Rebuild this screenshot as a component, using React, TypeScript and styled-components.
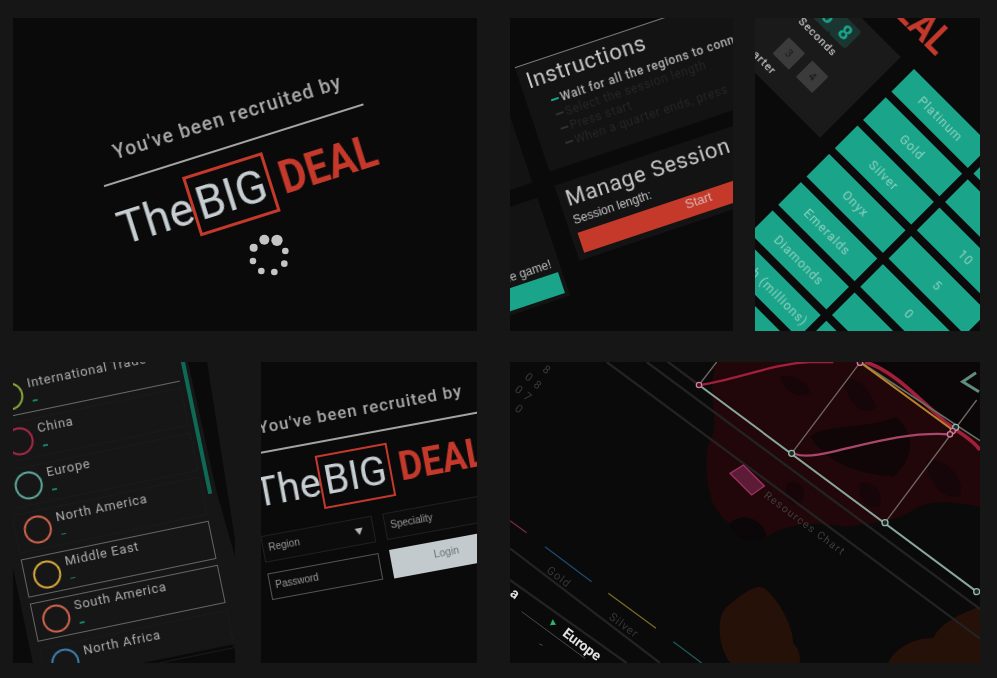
import React from 'react';
import styled, { createGlobalStyle } from 'styled-components';

const Global = createGlobalStyle`
  html, body { margin: 0; padding: 0; background: #161616; }
  * { box-sizing: border-box; }
`;

const Page = styled.main`
  width: 997px;
  height: 678px;
  padding: 18px 17px 15px 13px;
  display: flex;
  flex-direction: column;
  gap: 31px;
  background: #161616;
  font-family: Roboto, sans-serif;
  overflow: hidden;
`;
const Row = styled.section<{ $h: number }>`
  display: flex;
  height: ${p => p.$h}px;
`;
const Tile = styled.article<{ $w: number; $ml?: number }>`
  position: relative;
  flex: none;
  width: ${p => p.$w}px;
  margin-left: ${p => p.$ml ?? 0}px;
  height: 100%;
  overflow: hidden;
  background: #0a0a0b;
`;
const Stage = styled.div<{ $x: number; $y: number; $angle: number }>`
  position: absolute;
  left: ${p => p.$x}px;
  top: ${p => p.$y}px;
  transform: rotate(${p => p.$angle}deg);
  transform-origin: 0 0;
  filter: blur(0.35px);
`;

/* shared lock-up: headline, rule, logo */
const LockUp = styled.div<{ $size: number }>`
  font-size: ${p => p.$size}px;
  width: 5.91em;
`;
const Headline = styled.div`
  font-size: 0.42em;
  font-weight: 500;
  line-height: 1.2em;
  height: 2.02em;
  padding-left: 0.98em;
  letter-spacing: 0.062em;
  white-space: nowrap;
  color: #a9a9a9;
`;
const Rule = styled.div`
  height: 0.045em;
  background: #a4a4a4;
`;
const Logo = styled.div`
  display: flex;
  align-items: center;
  margin-top: 0.3em;
  height: 1.35em;
  padding-left: 0.02em;
  white-space: nowrap;
`;
const The = styled.span`
  flex: none;
  width: 1.65em;
  font-weight: 400;
  line-height: 1;
  color: #c6ced2;
`;
const BigBox = styled.span`
  flex: none;
  display: flex;
  align-items: center;
  justify-content: center;
  width: 1.83em;
  height: 1.35em;
  border: 0.07em solid #c5392b;
  font-weight: 400;
  color: #c6ced2;
  line-height: 1;
`;
const Deal = styled.span`
  flex: none;
  display: inline-block;
  margin-left: 0.2em;
  font-weight: 700;
  line-height: 1;
  color: #c5392b;
  transform: scaleX(0.9);
  transform-origin: 0 50%;
`;
const SpinnerSvg = styled.svg`
  position: absolute;
  left: 234px;
  top: 214px;
`;

/* tile 2 */
const Columns = styled.div`
  display: flex;
  align-items: flex-start;
  gap: 20px;
`;
const LeftCol = styled.div`
  display: flex;
  flex-direction: column;
  gap: 16px;
  width: 140px;
`;
const RightCol = styled.div`
  display: flex;
  flex-direction: column;
  gap: 15px;
  width: 300px;
`;
const Card = styled.div<{ $h: number }>`
  height: ${p => p.$h}px;
  background: #131314;
`;
const InstructionsCard = styled(Card)`
  padding: 3px 0 0 7px;
  border-top: 1px solid #7c7c7c;
`;
const CardTitle = styled.h2`
  margin: 0;
  font-size: 22px;
  line-height: 28px;
  font-weight: 400;
  letter-spacing: 0.7px;
  color: #c8c8c8;
  white-space: nowrap;
`;
const Steps = styled.ul`
  list-style: none;
  margin: 3px 0 0;
  padding: 0 0 0 17px;
`;
const Step = styled.li<{ $on?: boolean }>`
  display: flex;
  align-items: center;
  gap: 2px;
  height: 15px;
  font-size: 12px;
  font-weight: ${p => (p.$on ? 500 : 400)};
  letter-spacing: 0.6px;
  white-space: nowrap;
  color: ${p => (p.$on ? '#b4b4b4' : '#262626')};
  &::before {
    content: '';
    width: 8px;
    height: 2px;
    background: ${p => (p.$on ? '#1aa58a' : '#303030')};
  }
`;
const SessionCard = styled(Card)`
  padding: 3px 0 0 7px;
`;
const SessionLabel = styled.div`
  margin-top: 1px;
  font: 12px/14px 'Liberation Sans', sans-serif;
  color: #c4c4c4;
`;
const StartBar = styled.div`
  width: 250px;
  height: 21px;
  margin-top: 6px;
  background: #c5392b;
  text-align: center;
  font: 13px/15px 'Liberation Sans', sans-serif;
  color: #d9b7b1;
`;
const GameCard = styled(Card)`
  display: flex;
  flex-direction: column;
  justify-content: flex-end;
  padding: 4px;
`;
const GameText = styled.div`
  text-align: right;
  padding-right: 4px;
  font: 12px/14px 'Liberation Sans', sans-serif;
  color: #bdbdbd;
`;
const TealBar = styled.div`
  height: 22px;
  margin-top: 3px;
  background: #1aa58a;
`;

/* tile 3 */
const Table = styled.div`
  display: grid;
  grid-template-columns: 108px 108px 108px;
  grid-auto-rows: 32px;
  gap: 8px;
`;
const Cell = styled.div`
  display: flex;
  align-items: center;
  justify-content: center;
  background: #1aa58a;
  font-size: 12.5px;
  letter-spacing: 1px;
  white-space: nowrap;
  color: #8fcfbf;
`;
const TimerPanel = styled.div`
  position: absolute;
  left: -218px;
  top: 1px;
  width: 200px;
  height: 114px;
  padding-top: 10px;
  display: flex;
  flex-direction: column;
  align-items: flex-end;
  background: #1a1a1a;
`;
const Digits = styled.div`
  display: flex;
  margin-right: 45px;
`;
const Digit = styled.span`
  display: flex;
  align-items: center;
  justify-content: center;
  width: 23px;
  height: 24px;
  border-radius: 3px;
  background: #1b3531;
  color: #1aa58a;
  font-size: 20px;
  font-weight: 700;
`;
const TimerLabel = styled.div<{ $mt: number; $mr: number }>`
  margin: ${p => p.$mt}px ${p => p.$mr}px 0 0;
  font-size: 11px;
  line-height: 14px;
  font-weight: 500;
  letter-spacing: 1px;
  color: #c4c4c4;
`;
const Quarters = styled.div`
  display: flex;
  gap: 10px;
  margin: 13px 37px 0 0;
`;
const QuarterBtn = styled.span`
  display: flex;
  align-items: center;
  justify-content: center;
  width: 23px;
  height: 23px;
  border-radius: 1px;
  background: #3b3b3b;
  color: #191919;
  font-size: 11px;
`;
const CornerDeal = styled.span`
  position: absolute;
  left: -76px;
  top: -57px;
  font-size: 40px;
  font-weight: 700;
  line-height: 1;
  color: #c5392b;
  transform: scaleX(0.85);
  transform-origin: 0 50%;
`;

/* tile 4 */
const RegionPanel = styled.div`
  position: relative;
  width: 320px;
  height: 347px;
  padding: 40px 0 0 9px;
  background: #161617;
  display: flex;
  flex-direction: column;
  gap: 6.3px;
`;
const RegionRow = styled.div<{ $on?: boolean }>`
  display: flex;
  align-items: center;
  gap: 6px;
  flex: none;
  width: 192px;
  height: 39px;
  padding-left: 8px;
  border: 1px solid ${p => (p.$on ? '#666' : '#1a1a1b')};
`;
const RuledRow = styled(RegionRow)`
  border: 0;
  border-bottom: 1px solid #6a6a6a;
`;
const Ring = styled.span<{ $c: string }>`
  flex: none;
  width: 28px;
  height: 28px;
  border-radius: 50%;
  border: 2px solid ${p => p.$c};
`;
const RegionText = styled.div`
  display: flex;
  flex-direction: column;
  gap: 11px;
  margin-top: -6px;
`;
const RegionName = styled.div`
  font-size: 13px;
  line-height: 13px;
  letter-spacing: 0.7px;
  white-space: nowrap;
  color: #adadad;
`;
const RegionDash = styled.span`
  width: 5px;
  height: 1.5px;
  margin-left: 2px;
  background: #15806b;
`;
const Scroll = styled.div`
  position: absolute;
  left: 206px;
  top: 0;
  width: 3.5px;
  height: 195px;
  background: #0f6a55;
`;
const Gutter = styled.div`
  position: absolute;
  inset: 0;
  background: #0a0a0b;
  clip-path: polygon(175px 0, 194px 0, 222px 178px, 222px 195px, 204px 131px);
`;

/* tile 5 */
const Form = styled.div`
  display: grid;
  grid-template-columns: 113px 200px;
  grid-auto-rows: 27px;
  gap: 11px 11px;
  margin: 15px 0 0 -1px;
`;
const Field = styled.div<{ $outlined?: boolean }>`
  display: flex;
  align-items: center;
  justify-content: space-between;
  padding: 0 10px 0 5px;
  font: 10px/12px 'Liberation Sans', sans-serif;
  color: #9a9a9a;
  border: 1px solid ${p => (p.$outlined ? '#555' : '#202021')};
  background: #0c0c0d;
`;
const Caret = styled.span`
  width: 0;
  height: 0;
  border-left: 4px solid transparent;
  border-right: 4px solid transparent;
  border-top: 7px solid #b5b5b5;
`;
const LoginBtn = styled.div`
  display: flex;
  align-items: center;
  justify-content: center;
  height: 29px;
  margin-top: -1px;
  padding: 0 88px 5px 0;
  background: #c3cace;
  color: #6b6f72;
  font: 10.5px/12px 'Liberation Sans', sans-serif;
`;

/* tile 6 */
const ChartSvg = styled.svg`
  display: block;
  filter: blur(0.35px);
`;
const ChartText = styled.text<{ $c: string; $w?: number; $ls?: number; $fs: number }>`
  font-family: Roboto, sans-serif;
  font-size: ${p => p.$fs}px;
  font-weight: ${p => p.$w ?? 400};
  letter-spacing: ${p => p.$ls ?? 0}px;
  fill: ${p => p.$c};
`;

const Lock = () => (
  <>
    <Headline>You've been recruited by</Headline>
    <Rule />
    <Logo>
      <The>The</The>
      <BigBox>BIG</BigBox>
      <Deal>DEAL</Deal>
    </Logo>
  </>
);

const spinner: [number, number, number][] = [
  [760, 742, 12], [792, 718, 15], [830, 720, 17], [855, 752, 10],
  [852, 790, 10], [822, 815, 10], [783, 812, 10], [758, 782, 10],
];

const labels = ['Platinum', 'Gold', 'Silver', 'Onyx', 'Emeralds', 'Diamonds', 'Cash (millions)', ''];
const values = ['', '', '10', '5', '0', '', '', ''];

const regions: { name: string; c: string; on?: boolean }[] = [
  { name: 'China', c: '#a82a44' },
  { name: 'Europe', c: '#5fa89c' },
  { name: 'North America', c: '#d2644c' },
  { name: 'Middle East', c: '#d9a93a', on: true },
  { name: 'South America', c: '#d2644c', on: true },
  { name: 'North Africa', c: '#3d7fae' },
];

const ghostDigits: [number, number, string][] = [
  [125, 62, '8'], [72, 85, '0'], [98, 108, '8'], [42, 122, '0'], [68, 143, '7'], [42, 180, '0'],
];

const mapHoles = [
  'M1030 90 C1080 70 1110 130 1130 170 C1100 200 1050 180 1030 90Z',
  'M840 80 C880 70 930 100 930 130 C890 150 850 120 840 80Z',
  'M1280 330 C1330 320 1400 380 1380 440 C1330 450 1280 400 1280 330Z',
  'M1080 400 C1120 390 1150 420 1140 470 C1100 480 1070 450 1080 400Z',
  'M860 400 C900 380 930 430 900 460 C870 470 850 440 860 400Z',
];

export default function App() {
  return (
    <Page>
      <Global />
      <Row $h={313}>
        <Tile $w={464}>
          <Stage $x={79} $y={130} $angle={-17.5}>
            <LockUp $size={46}><Lock /></LockUp>
          </Stage>
          <SpinnerSvg width={43.3} height={46.7} viewBox="740 695 130 140">
            {spinner.map(([x, y, r]) => <circle key={x} cx={x} cy={y} r={r} fill="#c4c4c4" />)}
          </SpinnerSvg>
        </Tile>
        <Tile $w={223} $ml={33}>
          <Stage $x={-147} $y={100} $angle={-18.5}>
            <Columns>
              <LeftCol>
                <Card $h={115} />
                <GameCard $h={103}>
                  <GameText>Start the game!</GameText>
                  <TealBar />
                </GameCard>
              </LeftCol>
              <RightCol>
                <InstructionsCard $h={110}>
                  <CardTitle>Instructions</CardTitle>
                  <Steps>
                    <Step $on>Wait for all the regions to connect</Step>
                    <Step>Select the session length</Step>
                    <Step>Press start</Step>
                    <Step>When a quarter ends, press</Step>
                  </Steps>
                </InstructionsCard>
                <SessionCard $h={79}>
                  <CardTitle>Manage Session</CardTitle>
                  <SessionLabel>Session length:</SessionLabel>
                  <StartBar>Start</StartBar>
                </SessionCard>
              </RightCol>
            </Columns>
          </Stage>
        </Tile>
        <Tile $w={225} $ml={22}>
          <Stage $x={159} $y={51} $angle={45}>
            <TimerPanel>
              <Digits><Digit>5</Digit><Digit>8</Digit></Digits>
              <TimerLabel $mt={4} $mr={48}>Seconds</TimerLabel>
              <Quarters><QuarterBtn>3</QuarterBtn><QuarterBtn>4</QuarterBtn></Quarters>
              <TimerLabel $mt={6} $mr={78}>Quarter</TimerLabel>
            </TimerPanel>
            <CornerDeal>DEAL</CornerDeal>
            <Table>
              {labels.map((l, i) => (
                <React.Fragment key={i}>
                  <Cell>{l}</Cell>
                  <Cell>{values[i]}</Cell>
                  <Cell />
                </React.Fragment>
              ))}
            </Table>
          </Stage>
        </Tile>
      </Row>
      <Row $h={301}>
        <Tile $w={222}>
          <Stage $x={-46} $y={-17} $angle={-11.7}>
            <RegionPanel>
              <Scroll />
              <RuledRow>
                <Ring $c="#8aa93a" />
                <RegionText><RegionName>International Trade</RegionName><RegionDash /></RegionText>
              </RuledRow>
              {regions.map(r => (
                <RegionRow key={r.name} $on={r.on}>
                  <Ring $c={r.c} />
                  <RegionText><RegionName>{r.name}</RegionName><RegionDash /></RegionText>
                </RegionRow>
              ))}
            </RegionPanel>
          </Stage>
          <Gutter />
        </Tile>
        <Tile $w={216} $ml={26}>
          <Stage $x={-21.5} $y={59} $angle={-10.5}>
            <LockUp $size={40}><Lock /></LockUp>
            <Form>
              <Field>Region<Caret /></Field>
              <Field>Speciality</Field>
              <Field $outlined>Password</Field>
              <LoginBtn>Login</LoginBtn>
            </Form>
          </Stage>
        </Tile>
        <Tile $w={470} $ml={33}>
          <ChartSvg width={470} height={301} viewBox="30 36 1410 903">
            <path d="M650 36 L1440 36 L1440 470 C1380 460 1300 440 1240 480 C1180 520 1100 520 1040 530 C960 520 880 510 800 560 C740 560 660 520 635 450 C615 380 610 300 640 250 C650 180 620 120 650 36Z" fill="#22070a" />
            <path d="M1110 36 L1440 36 L1440 270 C1350 220 1250 120 1110 36Z" fill="#0b0607" />
            <path d="M930 260 C980 220 1090 240 1190 200 C1240 250 1250 320 1180 380 C1100 370 1000 360 930 260Z" fill="#100507" />
            {mapHoles.map(d => <path key={d} d={d} fill="#170609" />)}
            <path d="M690 939 C650 880 650 800 680 770 C720 740 770 690 800 720 C860 780 880 850 880 880 C900 900 900 920 900 939Z" fill="#261108" />
            <path d="M1165 939 C1180 900 1240 860 1300 865 C1320 820 1380 790 1440 770 L1440 939Z" fill="#261108" />
            <path d="M690 520 C730 480 790 510 800 560 C770 580 700 580 690 520Z" fill="#0b0708" />
            <g stroke="#232323" strokeWidth="7" fill="none">
              <path d="M320 36 L1440 866" />
              <path d="M440 36 L1440 777" />
              <path d="M500 33 L597 105" />
              <path d="M30 595 L480 939" />
              <path d="M30 690 L380 939" />
            </g>
            <path d="M30 512 L80 548" stroke="#7a2a48" strokeWidth="4" />
            <path d="M135 590 L275 695" stroke="#1f4a6e" strokeWidth="4" />
            <path d="M325 730 L468 835" stroke="#7a6a28" strokeWidth="4" />
            <path d="M520 875 L605 939" stroke="#1f5a5a" strokeWidth="4" />
            <path d="M65 785 L255 925" stroke="#4a4a4a" strokeWidth="3" />
            <path d="M118 882 L128 886" stroke="#4a4a4a" strokeWidth="3" />
            <g stroke="#6f6563" strokeWidth="4" fill="none">
              <path d="M597 105 L650 36" />
              <path d="M875 310 L1080 38" />
              <path d="M1155 518 L1430 150" />
            </g>
            <path d="M597 105 L1430 725" stroke="#8aa59c" strokeWidth="6" />
            <path d="M600 105 C700 92 820 40 930 36 L1000 36" stroke="#a0203c" strokeWidth="7" fill="none" />
            <path d="M1095 36 C1180 60 1260 150 1340 220 C1380 250 1420 270 1440 300" stroke="#a0203c" strokeWidth="11" fill="none" />
            <path d="M1090 42 L1440 272" stroke="#5f7568" strokeWidth="5" />
            <path d="M1085 40 L1358 240" stroke="#b8842a" strokeWidth="6" />
            <path d="M885 312 C960 340 1150 240 1350 253" stroke="#a8466c" strokeWidth="7" fill="none" />
            {[[875, 310], [1155, 518], [1430, 725], [1367, 232]].map(([x, y]) => (
              <circle key={x} cx={x} cy={y} r="9" fill="#1a2a26" stroke="#9ab5aa" strokeWidth="4" />
            ))}
            {[[597, 105], [1080, 38], [1358, 243], [1350, 253]].map(([x, y]) => (
              <circle key={x} cx={x} cy={y} r="8" fill="#3a1020" stroke="#d08098" strokeWidth="4" />
            ))}
            <path d="M1428 68 L1388 95 L1437 125" stroke="#5f8d7d" strokeWidth="9" fill="none" />
            <path d="M730 345 L793 408 L755 435 L690 370Z" fill="#5c1c38" stroke="#a03060" strokeWidth="4" />
            <ChartText $c="#3e3e3e" $fs={32} $ls={4} transform="translate(790 440) rotate(37)">Resources Chart</ChartText>
            <ChartText $c="#363636" $fs={34} $ls={3} transform="translate(137 665) rotate(37)">Gold</ChartText>
            <ChartText $c="#363636" $fs={34} $ls={3} transform="translate(325 805) rotate(37)">Silver</ChartText>
            <ChartText $c="#e2e2e2" $fs={42} $w={700} transform="translate(185 855) rotate(37)">Europe</ChartText>
            <ChartText $c="#e2e2e2" $fs={42} $w={700} transform="translate(28 735) rotate(37)">a</ChartText>
            <path d="M150 826 L158 808 L168 824Z" fill="#2fb36a" />
            {ghostDigits.map(([x, y, t], i) => (
              <ChartText key={i} $c="#3a3a3a" $fs={34} transform={`translate(${x} ${y}) rotate(37)`}>{t}</ChartText>
            ))}
          </ChartSvg>
        </Tile>
      </Row>
    </Page>
  );
}
